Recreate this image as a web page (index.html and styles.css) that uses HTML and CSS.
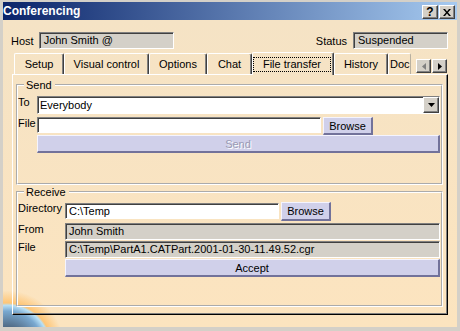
FILE: index.html
```html
<!DOCTYPE html>
<html lang="en">
<head>
  <meta charset="UTF-8">
  <meta name="viewport" content="width=device-width, initial-scale=1.0">
  <title>Conferencing</title>
  <link rel="stylesheet" href="styles.css">
</head>
<body>
  <div class="window">
    <div class="titlebar">
      <span class="title">Conferencing</span>
      <span class="cap-btn">?</span>
      <span class="cap-btn">
        <svg width="8" height="7" viewBox="0 0 8 7"><path d="M0 0h2l2 2.4L6 0h2L5 3.5 8 7H6L4 4.6 2 7H0l3-3.5z" fill="#000"/></svg>
      </span>
    </div>
    <div class="client">
      <div class="host-row">
        <span class="host-label">Host</span>
        <div class="field host-field">John Smith @</div>
        <span class="status-label">Status</span>
        <div class="field status-field">Suspended</div>
      </div>

      <div class="tabbox">
        <div class="tabs">
          <div class="tab tab-setup">Setup</div>
          <div class="tab tab-visual">Visual control</div>
          <div class="tab tab-options">Options</div>
          <div class="tab tab-chat">Chat</div>
          <div class="tab tab-file tab-active"><span class="focus">File transfer</span></div>
          <div class="tab tab-history">History</div>
          <div class="tab tab-doc">Doc</div>
          <div class="tab-scroll">
            <span class="scroll-btn">
              <svg width="4" height="7" viewBox="0 0 4 7"><path d="M4 0v7L0 3.5z" fill="#808080"/></svg>
            </span>
            <span class="scroll-btn">
              <svg width="4" height="7" viewBox="0 0 4 7"><path d="M0 0v7l4-3.5z" fill="#000"/></svg>
            </span>
          </div>
        </div>

        <div class="panel">
          <fieldset class="group send">
            <legend>Send</legend>
            <div class="send-body">
              <div class="row">
                <label class="lbl-send">To</label>
                <div class="combo">
                  <span class="combo-text">Everybody</span>
                  <span class="combo-btn">
                    <svg width="7" height="4" viewBox="0 0 7 4"><path d="M0 0h7L3.5 4z" fill="#000"/></svg>
                  </span>
                </div>
              </div>
              <div class="row row-file">
                <label class="lbl-send">File</label>
                <input class="text-input file-input" type="text" value="">
                <button class="btn browse">Browse</button>
              </div>
              <div class="row">
                <span class="lbl-send"></span>
                <button class="btn wide" disabled>Send</button>
              </div>
            </div>
          </fieldset>

          <fieldset class="group receive">
            <legend>Receive</legend>
            <div class="receive-body">
              <div class="row">
                <label class="lbl-recv">Directory</label>
                <input class="text-input dir-input" type="text" value="C:\Temp">
                <button class="btn browse browse-dir">Browse</button>
              </div>
              <div class="row row-from">
                <label class="lbl-recv">From</label>
                <div class="field wide-field">John Smith</div>
              </div>
              <div class="row row-next">
                <label class="lbl-recv">File</label>
                <div class="field wide-field">C:\Temp\PartA1.CATPart.2001-01-30-11.49.52.cgr</div>
              </div>
              <div class="row row-next">
                <span class="lbl-recv"></span>
                <button class="btn wide">Accept</button>
              </div>
            </div>
          </fieldset>
        </div>
      </div>
    </div>
  </div>
</body>
</html>
```

FILE: styles.css
```css
body {
  margin: 0;
  font-family: "Liberation Sans", Arial, sans-serif;
  font-size: 11px;
  color: #000;
  background: #d4d0c8;
}

.window {
  width: 460px;
  height: 331px;
  box-sizing: border-box;
  border: solid #d4d0c8;
  border-width: 2px 3px 4px 3px;
  display: flex;
  flex-direction: column;
}

/* title bar */
.titlebar {
  flex: none;
  height: 18px;
  display: flex;
  align-items: center;
  padding-right: 2px;
  background: linear-gradient(to right, #0a246a, #a6caf0);
}
.title {
  flex: 1;
  color: #fff;
  font-weight: bold;
  font-size: 12px;
}
.cap-btn {
  width: 16px;
  height: 14px;
  box-sizing: border-box;
  margin: 2px 0 0 1px;
  display: flex;
  align-items: center;
  justify-content: center;
  background: #d4d0c8;
  border: 1px solid;
  border-color: #fff #404040 #404040 #fff;
  box-shadow: inset -1px -1px 0 #808080;
  font-weight: bold;
  font-size: 12px;
  line-height: 12px;
}

/* client area */
.client {
  flex: 1;
  background:
    radial-gradient(circle 46px at 4px 328px, #343e4c 0%, #4a6078 40%, #78a8d0 80%, #b8e0f6 93%, rgba(255, 190, 100, 0.8) 98%, rgba(255, 210, 140, 0) 125%),
    linear-gradient(#f5e3c5, #fce4bf);
}

.host-row {
  display: flex;
  align-items: center;
  padding: 12px 9px 0 8px;
}
.host-label {
  margin-right: 5px;
}
.host-field {
  width: 135px;
}
.status-label {
  margin-left: auto;
  margin-right: 6px;
}
.status-field {
  width: 95px;
}

.field {
  height: 17px;
  box-sizing: border-box;
  border: 1px solid;
  border-color: #808080 #fff #fff #808080;
  box-shadow: inset 1px 1px 0 #404040;
  background: #d4d0c8;
  padding-left: 4px;
  line-height: 15px;
  white-space: nowrap;
  overflow: hidden;
}

/* tabs */
.tabbox {
  margin: 4px 9px 0 9px;
}
.tabs {
  display: flex;
  align-items: flex-end;
  height: 21px;
  padding-left: 2px;
}
.tab {
  box-sizing: border-box;
  height: 21px;
  border: 1px solid;
  border-color: #fff #404040 transparent #fff;
  border-bottom: 0;
  border-radius: 2px 2px 0 0;
  box-shadow: inset -1px 0 0 #808080;
  text-align: center;
  line-height: 20px;
  white-space: nowrap;
  overflow: hidden;
}
.tab-setup { width: 50px; }
.tab-visual { width: 85px; }
.tab-options { width: 58px; }
.tab-chat { width: 45px; }
.tab-file { width: 82px; }
.tab-history { width: 54px; }
.tab-doc {
  width: 23px;
  text-align: left;
  padding-left: 1px;
  border-right-color: #b8b0a0;
  box-shadow: none;
}
.tab-active {
  height: 23px;
  margin-bottom: -1px;
  position: relative;
  z-index: 1;
  background: #f5e3c5;
  padding-top: 4px;
}
.focus {
  display: block;
  width: 78px;
  box-sizing: border-box;
  border: 1px dotted #000;
  line-height: 13px;
}
.tab-scroll {
  display: flex;
  gap: 1px;
  margin: 0 1px 1px auto;
}
.scroll-btn {
  width: 15px;
  height: 14px;
  box-sizing: border-box;
  display: flex;
  align-items: center;
  justify-content: center;
  background: #d4d0c8;
  border: 1px solid;
  border-color: #fff #404040 #404040 #fff;
  box-shadow: inset -1px -1px 0 #808080;
}

.panel {
  height: 241px;
  box-sizing: border-box;
  border: 1px solid;
  border-color: #fff #000 #000 #fff;
  box-shadow: inset -1px -1px 0 #808080;
  padding: 4px 4px 0 3px;
}

/* group boxes */
.group {
  margin: 0;
  padding: 0;
  min-width: 0;
  border: 2px groove #fff;
}
.group legend {
  margin-left: 6px;
  padding: 0 3px 0 2px;
  line-height: 12px;
}
.receive {
  margin-top: 1px;
}
.send-body {
  padding: 5px 1px 30px 0;
}
.receive-body {
  padding: 4px 1px 28px 0;
}

.row {
  display: flex;
  align-items: flex-start;
}
.row label {
  line-height: 13px;
}
.lbl-send {
  flex: none;
  width: 19px;
}
.lbl-recv {
  flex: none;
  width: 47px;
}
.row-file {
  margin-top: 3px;
}
.row-from {
  margin-top: 2px;
}
.row-next {
  margin-top: 1px;
}

.combo {
  flex: 1;
  height: 18px;
  box-sizing: border-box;
  display: flex;
  border: 1px solid;
  border-color: #808080 #fff #fff #808080;
  box-shadow: inset 1px 1px 0 #404040;
  background: #fff;
}
.combo-text {
  flex: 1;
  padding: 1px 0 0 2px;
  line-height: 15px;
}
.combo-btn {
  width: 16px;
  box-sizing: border-box;
  display: flex;
  align-items: center;
  justify-content: center;
  background: #d4d0c8;
  border: 1px solid;
  border-color: #fff #404040 #404040 #fff;
  box-shadow: inset -1px -1px 0 #808080;
}

.text-input {
  font: inherit;
  color: #000;
  height: 16px;
  box-sizing: border-box;
  margin: 0;
  padding: 0 3px;
  border: 1px solid;
  border-color: #808080 #fff #fff #808080;
  box-shadow: inset 1px 1px 0 #404040;
  background: #fff;
  outline: none;
}
.file-input {
  width: 284px;
  margin-right: 2px;
}
.dir-input {
  width: 214px;
  margin: 1px 2px 0 0;
}
.wide-field {
  flex: 1;
  padding-left: 3px;
}

.btn {
  font: inherit;
  color: #000;
  margin: 0;
  padding: 0;
  height: 18px;
  box-sizing: border-box;
  background: #d0d0ea;
  border-style: solid;
  border-width: 1px 2px 2px 1px;
  border-color: #f4f4ff #72729a #72729a #f4f4ff;
}
.btn:disabled {
  color: #9a9ab4;
  text-shadow: 1px 1px 0 #fff;
}
.browse {
  width: 50px;
}
.browse-dir {
  height: 19px;
}
.wide {
  flex: 1;
}
```
